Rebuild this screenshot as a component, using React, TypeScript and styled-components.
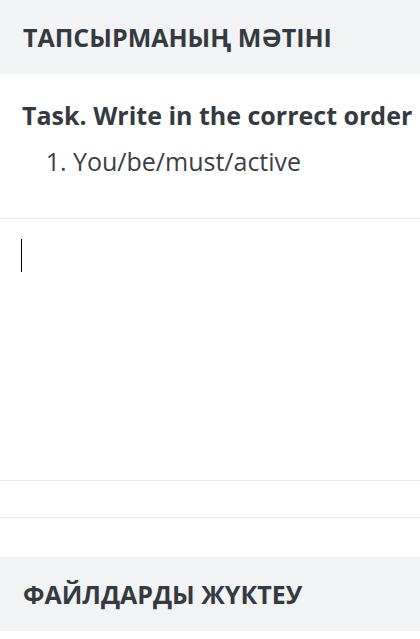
import { FC } from "react";
import styled, { createGlobalStyle } from "styled-components";

const GlobalStyle = createGlobalStyle`
    body {
        margin: 0;
        background: #FFFFFF;
        font-family: 'Open Sans', 'Noto Sans', sans-serif;
    }
`

const App: FC = () => {
    return <Page>
        <GlobalStyle />
        <SectionHeader>ТАПСЫРМАНЫҢ МӘТІНІ</SectionHeader>
        <TaskBlock>
            <TaskTitle>Task. Write in the correct order</TaskTitle>
            <TaskList>
                <li>You/be/must/active</li>
            </TaskList>
        </TaskBlock>
        <Editor>
            <Caret />
        </Editor>
        <StatusBar />
        <Spacer />
        <SectionHeader>ФАЙЛДАРДЫ ЖҮКТЕУ</SectionHeader>
    </Page>
}

const Page = styled.div`
    display: flex;
    flex-direction: column;
    width: 420px;
    min-height: 639px;
    overflow: hidden;
`

const SectionHeader = styled.div`
    display: flex;
    align-items: center;
    height: 74px;
    padding: 0 23px;
    box-sizing: border-box;
    background: #F1F3F5;
    color: #343A40;
    font-weight: 700;
    font-size: 25px;
    white-space: nowrap;
`

const TaskBlock = styled.div`
    padding: 24px 0 0 22px;
    height: 144px;
    box-sizing: border-box;
    color: #343A40;
    white-space: nowrap;
`

const TaskTitle = styled.div`
    font-weight: 700;
    font-size: 25px;
    line-height: 34px;
`

const TaskList = styled.ol`
    margin: 12px 0 0;
    padding-left: 51px;
    font-size: 25px;
    line-height: 34px;
    color: #3B4046;
`

const Editor = styled.div`
    height: 262px;
    border-top: 1px solid #E3E4E6;
    padding: 20px 0 0 21px;
    box-sizing: border-box;
`

const Caret = styled.div`
    width: 1px;
    height: 33px;
    background: #000000;
`

const StatusBar = styled.div`
    height: 38px;
    border-top: 1px solid #E6E7E9;
    border-bottom: 1px solid #E3E4E6;
    box-sizing: border-box;
`

const Spacer = styled.div`
    height: 39px;
`

export default App;
